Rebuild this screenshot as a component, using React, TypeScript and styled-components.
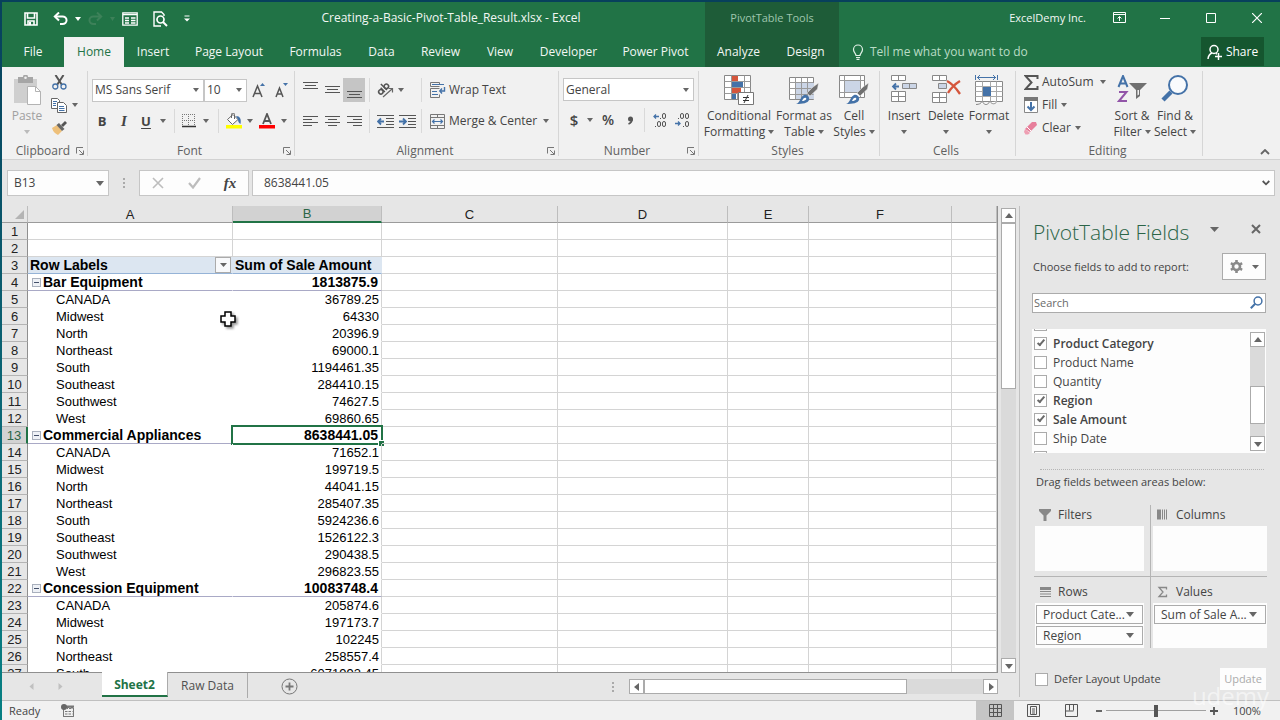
import React from "react";
import styled, { createGlobalStyle, css } from "styled-components";

const green = "#217346";
const ink = "#444444";
const steel = "#4472a8";
const line = "#ababab";
const ui = `"Open Sans", "Noto Sans", sans-serif`;
const sheetFont = `"Liberation Sans", Arial, sans-serif`;

const GlobalStyle = createGlobalStyle`
  *, *::before, *::after { box-sizing: border-box; }
  body { margin: 0; background: #e6e6e6; }
  button, input, select { font: inherit; color: inherit; margin: 0; padding: 0; border: 0; background: none; border-radius: 0; }
  svg { display: block; flex: none; }
  h1, h2, p { margin: 0; font: inherit; }
`;

/* ---------- window ---------- */

const Window = styled.div`
  display: flex;
  flex-direction: column;
  height: 100vh;
  min-width: 1280px;
  overflow: hidden;
  border-left: 2px solid;
  border-top: 2px solid #07435a;
  border-image: linear-gradient(#07405c, #0b6a78 60%, #078083) 2;
  background: #e6e6e6;
  color: ${ink};
  font: 12px/16px ${ui};
`;

const TitleBar = styled.header`
  display: flex;
  flex: none;
  height: 35px;
  background: ${green};
  color: #f2f7f4;
`;
const QuickAccess = styled.div`
  display: flex;
  align-items: center;
  flex: 0 0 195px;
  min-width: 0;
  padding: 0 0 2px 18px;
`;
const DocTitle = styled.h1`
  flex: 0 0 508px;
  text-align: center;
  font-size: 12px;
  line-height: 32px;
`;
const ToolTitle = styled.div`
  flex: 0 0 134px;
  background: #1e5c38;
  color: #9fc6ae;
  text-align: center;
  font-size: 11px;
  line-height: 32px;
`;
const Account = styled.div`
  flex: 1;
  text-align: right;
  padding-right: 10px;
  font-size: 11px;
  line-height: 32px;
`;
const Icon = styled.button<{ $w: number; $h?: number; $on?: boolean }>`
  display: flex;
  align-items: center;
  justify-content: center;
  flex: none;
  width: ${(p) => p.$w}px;
  height: ${(p) => p.$h ?? 24}px;
  ${(p) => p.$on && css`background: #c5c5c5;`}
`;
const WindowButtons = styled.div`
  display: flex;
  align-items: center;
  flex: none;
  padding-bottom: 4px;
`;

const TabBar = styled.nav`
  display: flex;
  flex: none;
  height: 30px;
  background: ${green};
  color: #f2f7f4;
`;
const Tab = styled.button<{ $w: number; $active?: boolean; $tool?: boolean }>`
  flex: none;
  width: ${(p) => p.$w}px;
  line-height: 28px;
  white-space: nowrap;
  ${(p) => p.$active && css`background: #f1f1f1; color: ${green};`}
  ${(p) => p.$tool && css`background: #1e5c38;`}
`;
const Spacer = styled.div<{ $w?: number }>`
  flex: ${(p) => (p.$w ? `0 0 ${p.$w}px` : "1")};
`;
const TellMe = styled.button`
  display: flex;
  align-items: center;
  gap: 6px;
  padding: 0 0 1px 13px;
  flex: 1;
  color: #b9dcc5;
`;
const Share = styled.button`
  display: flex;
  align-items: center;
  justify-content: center;
  gap: 4px;
  width: 63px;
  height: 29px;
  margin-right: 16px;
  background: #15562f;
  color: #fff;
`;

/* ---------- ribbon ---------- */

const Ribbon = styled.section`
  display: flex;
  flex: none;
  height: 93px;
  padding-top: 4px;
  background: #f1f1f1;
  border-bottom: 1px solid #d2d2d2;
`;
const GroupBox = styled.div<{ $w: number }>`
  display: flex;
  flex-direction: column;
  justify-content: space-between;
  flex: none;
  width: ${(p) => p.$w}px;
  height: 85px;
  border-right: 1px solid #d6d6d6;
`;
const GroupBody = styled.div<{ $pad?: number }>`
  display: flex;
  height: 72px;
  padding-left: ${(p) => p.$pad ?? 4}px;
`;
const GroupLabel = styled.div`
  display: flex;
  align-items: center;
  margin-bottom: -3px;
  padding-right: 3px;
  color: #606060;
  span { flex: 1; text-align: center; padding-left: 8px; }
`;
const Stack = styled.div<{ $top?: number; $gap?: number; $w?: number }>`
  display: flex;
  flex-direction: column;
  flex: none;
  ${(p) => p.$w && css`width: ${p.$w}px;`}
  padding-top: ${(p) => p.$top ?? 0}px;
  gap: ${(p) => p.$gap ?? 0}px;
`;
const Row = styled.div`
  display: flex;
  align-items: center;
`;
const Big = styled.button<{ $w: number; $dim?: boolean }>`
  display: flex;
  flex-direction: column;
  align-items: center;
  flex: none;
  width: ${(p) => p.$w}px;
  padding-top: 4px;
  line-height: 16px;
  white-space: nowrap;
  color: ${(p) => (p.$dim ? "#a0a0a0" : ink)};
  svg + span { margin-top: 3px; }
  & > span { display: flex; align-items: center; gap: 3px; height: 16px; }
`;
const Labeled = styled.button<{ $h?: number; $gap?: number }>`
  display: flex;
  align-items: center;
  gap: ${(p) => p.$gap ?? 4}px;
  height: ${(p) => p.$h ?? 24}px;
  white-space: nowrap;
`;
const Divider = styled.div`
  width: 1px;
  height: 24px;
  background: #d9d9d9;
`;
const Glyph = styled.span<{ $i?: boolean; $u?: boolean; $size?: number }>`
  font-weight: ${(p) => (p.$size ? 600 : 700)};
  font-size: ${(p) => p.$size ?? 13}px;
  line-height: 16px;
  ${(p) => p.$i && css`font-family: "Liberation Serif", serif; font-style: italic; font-size: 15px;`}
  ${(p) => p.$u && css`text-decoration: underline; text-underline-offset: 2px;`}
`;
const ComboBox = styled.label<{ $w: number }>`
  display: grid;
  align-items: center;
  flex: none;
  width: ${(p) => p.$w}px;
  height: 23px;
  border: 1px solid #c6c6c6;
  background: #fff;
  & > * { grid-area: 1 / 1; }
  & > svg { justify-self: end; margin-right: 4px; pointer-events: none; }
  select { appearance: none; height: 21px; width: 100%; padding-left: 2px; outline: 0; }
`;
const CollapseBox = styled.div`
  display: flex;
  flex: 1;
  align-items: flex-end;
  justify-content: flex-end;
  padding: 0 5px 2px 0;
`;

/* ---------- formula bar ---------- */

const FormulaBar = styled.section`
  display: flex;
  align-items: center;
  flex: none;
  height: 46px;
  padding: 0 5px;
`;
const Field = styled.div<{ $w?: number }>`
  display: flex;
  align-items: center;
  flex: ${(p) => (p.$w ? `0 0 ${p.$w}px` : "1")};
  min-width: 0;
  height: 26px;
  border: 1px solid #c6c6c6;
  background: #fdfdfd;
  input { flex: 1; width: 100%; min-width: 0; padding-left: ${(p) => (p.$w ? 6 : 11)}px; outline: 0; }
  input + svg { margin-right: 4px; }
`;
const Dots = styled.div<{ $w: number }>`
  display: flex;
  justify-content: center;
  flex: 0 0 ${(p) => p.$w}px;
`;

/* ---------- work area ---------- */

const Work = styled.main`
  display: flex;
  flex: 1;
  min-height: 0;
`;
const Book = styled.div`
  display: flex;
  flex-direction: column;
  flex: 1;
  min-width: 0;
`;
const SheetRow = styled.div`
  display: flex;
  flex: 1;
  min-height: 0;
`;
const Sheet = styled.div`
  flex: 1;
  min-width: 0;
  overflow: hidden;
  background: #fff;
  border-right: 1px solid #8f8f8f;
  border-bottom: 1px solid #8f8f8f;
`;
const Grid = styled.table`
  width: 100%;
  table-layout: fixed;
  border-collapse: separate;
  border-spacing: 0;
  color: #000;
  font: 13px/14px ${sheetFont};
  tr { height: 17px; }
`;
const ColHead = styled.th<{ $on?: boolean }>`
  height: 17px;
  padding: 1px 0 0;
  background: ${(p) => (p.$on ? "#d2d2d2" : "#e6e6e6")};
  border-right: 1px solid #bdbdbd;
  border-bottom: 1px solid #9b9b9b;
  font-weight: 400;
  color: #222;
  ${(p) => p.$on && css`color: #2c6547; border-bottom: 2px solid ${green};`}
  svg { margin-left: auto; margin-right: 3px; }
`;
const RowHead = styled.th<{ $on?: boolean }>`
  height: 17px;
  padding: 2px 0 0;
  background: ${(p) => (p.$on ? "#d2d2d2" : "#e6e6e6")};
  border-right: ${(p) => (p.$on ? `2px solid ${green}` : "1px solid #8f8f8f")};
  border-bottom: 1px solid #b4b4b4;
  font-weight: 400;
  color: ${(p) => (p.$on ? "#2c6547" : "#222")};
`;
const Cell = styled.td<{ $kind?: string }>`
  position: relative;
  height: 17px;
  padding: 0 2px;
  white-space: nowrap;
  border-right: 1px solid #d4d4d4;
  border-bottom: 1px solid #d4d4d4;
  ${(p) => p.$kind === "head" && css`
    background: #dce6f1;
    border-bottom-color: #95b3d7;
    border-right-color: #dce6f1;
    font-weight: 700;
    font-size: 14px;
  `}
  ${(p) => p.$kind === "groupName" && css`
    border-right-color: #fff;
    border-bottom-color: #a9a9c6;
    font-weight: 700;
    font-size: 14px;
  `}
  ${(p) => p.$kind === "groupSum" && css`
    border-bottom-color: #a9a9c6;
    padding-right: 3px;
    font-weight: 700;
    font-size: 14px;
    text-align: right;
  `}
  ${(p) => p.$kind === "name" && css`
    border-right-color: #fff;
    border-bottom-color: #fff;
    padding: 2px 0 0 28px;
  `}
  ${(p) => p.$kind === "sum" && css`
    border-bottom-color: #fff;
    padding-top: 2px;
    text-align: right;
  `}
`;
const CellFlex = styled.div`
  display: flex;
  align-items: center;
  height: 16px;
  span { flex: 1; }
`;
const FilterButton = styled.button`
  display: flex;
  align-items: center;
  justify-content: center;
  width: 16px;
  height: 16px;
  margin-right: -1px;
  border: 1px solid ${line};
  background: #f8f9fb;
`;
const Collapse = styled.button`
  display: flex;
  align-items: center;
  justify-content: center;
  width: 9px;
  height: 9px;
  margin: 0 2px;
  border: 1px solid #a9b0bd;
  background: #eef1f6;
  &::after { content: ""; width: 5px; height: 1px; background: #44506a; }
`;
const Selection = styled.div`
  position: absolute;
  inset: -2px;
  border: 2px solid ${green};
  &::after {
    content: "";
    position: absolute;
    right: -3px;
    bottom: -3px;
    width: 6px;
    height: 6px;
    background: ${green};
    border: 1px solid #fff;
    border-width: 1px 0 0 1px;
  }
`;
const Pointer = styled.svg`
  position: absolute;
  left: 192px;
  top: 3px;
  z-index: 1;
  filter: drop-shadow(2px 2px 1px rgba(0, 0, 0, 0.4));
`;

const VScroll = styled.div`
  display: flex;
  flex-direction: column;
  align-items: center;
  flex: 0 0 21px;
  padding: 2px 0 0;
`;
const VTrack = styled.div`
  flex: 1;
  width: 15px;
  background: #dadada;
`;
const ScrollButton = styled.button`
  display: flex;
  align-items: center;
  justify-content: center;
  flex: none;
  width: 15px;
  height: 15px;
  border: 1px solid ${line};
  background: #fff;
`;
const Thumb = styled.div<{ $w: number; $h: number }>`
  width: ${(p) => p.$w}px;
  height: ${(p) => p.$h}px;
  border: 1px solid ${line};
  background: #fff;
`;
const ThumbGap = styled.div`
  height: 39px;
`;

const SheetTabs = styled.div`
  display: flex;
  height: 27px;
  flex: none;
`;
const NavArrows = styled.div`
  display: flex;
  align-items: center;
  width: 100px;
  padding-left: 15px;
`;
const SheetTab = styled.button<{ $active?: boolean }>`
  width: ${(p) => (p.$active ? 66 : 80)}px;
  height: 25px;
  font-size: 12px;
  line-height: 25px;
  color: #505050;
  border-right: 1px solid ${line};
  ${(p) => p.$active && css`
    position: relative;
    margin-top: -1px;
    background: #fff;
    color: ${green};
    font-weight: 700;
    border-bottom: 2px solid ${green};
  `}
`;
const HScroll = styled.div`
  display: flex;
  align-items: center;
  flex: 0 0 369px;
  margin-right: 21px;
`;
const HTrack = styled.div`
  flex: 1;
  height: 15px;
  background: #dadada;
`;

/* ---------- field pane ---------- */

const Pane = styled.aside`
  display: flex;
  flex-direction: column;
  flex: 0 0 261px;
  padding: 14px 14px 0 12px;
  margin-bottom: 3px;
  border-left: 1px solid #c0c0c0;
`;
const PaneHead = styled.div`
  display: flex;
  align-items: flex-start;
  height: 33px;
  padding-left: 1px;
`;
const PaneTitle = styled.h2`
  flex: 1;
  font-weight: 300;
  font-size: 21px;
  line-height: 24px;
  white-space: nowrap;
  color: #2b6447;
`;
const PaneLine = styled.div`
  display: flex;
  align-items: center;
  justify-content: space-between;
  height: 27px;
  padding-left: 1px;
  font-size: 11px;
`;
const GearButton = styled.button`
  display: flex;
  align-items: center;
  justify-content: center;
  gap: 9px;
  width: 44px;
  height: 27px;
  border: 1px solid ${line};
  background: #fdfdfd;
`;
const Search = styled.label`
  display: flex;
  align-items: center;
  height: 20px;
  margin-top: 13px;
  padding: 0 2px 1px 1px;
  border: 1px solid ${line};
  background: #fff;
  font-size: 11px;
  input { flex: 1; min-width: 0; outline: 0; line-height: 17px; }
  input::placeholder { color: #6a6a6a; opacity: 1; }
`;
const FieldBox = styled.div`
  display: flex;
  flex: none;
  height: 124px;
  margin-top: 16px;
  background: #fdfdfd;
`;
const FieldList = styled.div`
  display: flex;
  flex-direction: column;
  justify-content: center;
  flex: 1;
  overflow: hidden;
`;
const Check = styled.label<{ $bold?: boolean; $small?: boolean }>`
  display: flex;
  align-items: center;
  gap: 6px;
  flex: none;
  height: 19px;
  padding-left: 2px;
  font-weight: ${(p) => (p.$bold ? 600 : 400)};
  ${(p) => p.$small && css`font-size: 11px;`}
  input {
    appearance: none;
    display: flex;
    justify-content: center;
    width: 13px;
    height: 13px;
    border: 1px solid ${line};
    background: #fff;
  }
  input:checked::after {
    content: "";
    width: 4px;
    height: 8px;
    border: solid #6a6a6a;
    border-width: 0 2px 2px 0;
    transform: rotate(40deg);
  }
`;
const FieldScroll = styled.div`
  display: flex;
  flex-direction: column;
  flex: 0 0 16px;
  padding: 3px 0 2px;
`;
const Dotted = styled.div`
  margin: 16px 2px 0 8px;
  border-top: 1px dotted #b5b5b5;
`;
const DragText = styled.p`
  padding: 4px 0 0 4px;
  font-size: 11px;
`;
const Areas = styled.div`
  display: grid;
  grid-template-columns: 117px 1fr;
  margin: 15px -1px 0 2px;
`;
const Area = styled.section<{ $left?: boolean; $upper?: boolean }>`
  height: ${(p) => (p.$upper ? 72 : 71)}px;
  padding-top: ${(p) => (p.$upper ? 0 : 5)}px;
  ${(p) => p.$left ? css`padding-right: 6px; padding-left: 1px; border-right: 1px solid #b5b5b5;` : css`padding-left: 2px;`}
  ${(p) => p.$upper && css`border-bottom: 1px solid #b5b5b5;`}
  h2 { display: flex; align-items: center; gap: 7px; height: 21px; padding: 0 0 1px 4px; }
`;
const DropZone = styled.div`
  display: flex;
  flex-direction: column;
  gap: 2px;
  height: 45px;
  padding: 2px 1px;
  background: #fdfdfd;
`;
const Pill = styled.button`
  display: flex;
  align-items: center;
  justify-content: space-between;
  height: 19px;
  padding: 0 8px 0 6px;
  border: 1px solid ${line};
  white-space: nowrap;
`;
const Footer = styled.div`
  display: flex;
  align-items: center;
  justify-content: space-between;
  margin-top: 20px;
  padding-left: 1px;
`;
const Update = styled.button`
  width: 46px;
  height: 22px;
  background: #fdfdfd;
  color: #ababab;
  font-size: 11px;
`;

/* ---------- status bar ---------- */

const Status = styled.footer`
  display: flex;
  align-items: center;
  flex: none;
  height: 20px;
  padding-left: 7px;
  background: #f1f1f1;
  border-top: 1px solid #c0c0c0;
  font-size: 11px;
`;
const Zoom = styled.input`
  appearance: none;
  width: 100px;
  height: 14px;
  margin: 0 4px;
  background: linear-gradient(#a0a0a0, #a0a0a0) center / 100% 1px no-repeat;
  &::-webkit-slider-thumb {
    appearance: none;
    width: 4px;
    height: 12px;
    background: #555;
  }
`;
const Percent = styled.span`
  width: 62px;
  padding-left: 15px;
`;
const Watermark = styled.div`
  position: absolute;
  right: 11px;
  bottom: 8px;
  font: 24px/32px ${ui};
  color: rgba(255, 255, 255, 0.55);
  pointer-events: none;
`;
const Frame = styled.div`
  position: relative;
`;

/* ---------- icons ---------- */

const Caret = ({ w = 7, c = "#666" }: { w?: number; c?: string }) => (
  <svg width={w} height={w > 7 ? 5 : 4} viewBox="0 0 8 4" preserveAspectRatio="none"><path d="M0 0h8L4 4z" fill={c} /></svg>
);
const Tri = ({ d }: { d: "up" | "down" | "left" | "right" }) => {
  const paths = { up: "M4 1l4 5H0z", down: "M0 2h8L4 7z", left: "M6 0v8L1 4z", right: "M2 0v8l5-4z" };
  return <svg width="8" height="8"><path d={paths[d]} fill="#666" /></svg>;
};
const S = ({ w, h, children }: { w: number; h: number; children: React.ReactNode }) => (
  <svg width={w} height={h} viewBox={`0 0 ${w} ${h}`} fill="none">{children}</svg>
);
const Launcher = () => (
  <S w={8} h={8}><path d="M0.5 6.500V.5H7M3 3l4 4M7.500 3.500v4h-4" stroke="#777" /></S>
);
const SaveIcon = () => (
  <S w={14} h={14}><path d="M1 1h12v12H1zM3.500 1v5h7V1M4 13V9h6v4" stroke="#fff" strokeWidth="1.600" /><path d="M5 10h2v3H5z" fill="#fff" /></S>
);
const UndoIcon = () => (
  <S w={15} h={13}><path d="M2 4.500h7.500a4 3.700 0 0 1 0 7.500H7" stroke="#fff" strokeWidth="2" /><path d="M6 .5L1.800 4.500 6 8.500" stroke="#fff" strokeWidth="2" /></S>
);
const RedoIcon = () => (
  <S w={15} h={13}><path d="M13 4.500H5.500a4 3.700 0 0 0 0 7.500H8M9 .5l4.200 4L9 8.500" stroke="#3d8159" strokeWidth="2" /></S>
);
const FormIcon = () => (
  <S w={16} h={14}><path d="M.8 .8h14.400v12.400H.8z" stroke="#fff" strokeWidth="1.300" /><path d="M1 2.500h14M3 6h4M3 8.500h4M3 11h4M9 6h4.500M9 8.500h4.500M9 11h4.500" stroke="#fff" strokeWidth="1.300" /></S>
);
const PreviewIcon = () => (
  <S w={15} h={16}><path d="M11 5V3.500L8.500 1H1v14h7" stroke="#fff" strokeWidth="1.400" /><circle cx="7.500" cy="8.500" r="3.500" stroke="#fff" strokeWidth="1.700" /><path d="M10 11l4 4" stroke="#fff" strokeWidth="2" /></S>
);
const CustomizeIcon = () => (
  <S w={6} h={7}><path d="M.5 1h5" stroke="#fff" /><path d="M0 3.500h6l-3 3z" fill="#fff" /></S>
);
const RibbonIcon = () => (
  <S w={13} h={11}><path d="M.5 .5h12v10H.5zM.5 2.500h12M6.500 9V4.500M4.500 6.500l2-2 2 2" stroke="#fff" /></S>
);
const BulbIcon = () => (
  <S w={12} h={16}><path d="M4 11.500c0-2-2.500-3-2.500-6a4.300 4.300 0 0 1 9 0c0 3-2.500 4-2.500 6zM4 13.500h4M4.500 15.300h3" stroke="#e2f1e7" strokeWidth="1.200" /></S>
);
const PersonIcon = () => (
  <S w={15} h={16}><circle cx="7" cy="5.500" r="4" stroke="#fff" strokeWidth="1.500" /><path d="M1 15c.3-3 1.500-5 4-6M9 9.500l1 .5M8 12.500h7M11.500 9v7" stroke="#fff" strokeWidth="1.500" /></S>
);
const PasteIcon = () => (
  <S w={28} h={30}>
    <path d="M1 4h23v24H1z" fill="#cfcfcf" /><path d="M5 2h5a2.500 2.500 0 0 1 5 0h5v6H5z" fill="#a6a6a6" /><circle cx="12.500" cy="2.800" r="1.300" fill="#f1f1f1" />
    <path d="M14.500 11.500h8l5 5v13h-13z" fill="#fff" stroke="#b3b3b3" /><path d="M22.500 11.500v5h5" stroke="#b3b3b3" />
  </S>
);
const CutIcon = () => (
  <S w={15} h={15}><path d="M3.500 0L10 10M11.500 0L5 10" stroke="#555" strokeWidth="2" /><circle cx="3.300" cy="11.500" r="2.500" stroke={steel} strokeWidth="1.300" /><circle cx="11.500" cy="11.500" r="2.500" stroke={steel} strokeWidth="1.300" /></S>
);
const CopyIcon = () => (
  <S w={16} h={15}>
    <path d="M.5 .5h6l2 2v8h-8z" fill="#fff" stroke="#666" /><path d="M2 3.500h4M2 5.500h3M2 7.500h3" stroke={steel} />
    <path d="M6.500 4.500h6l3 3v7h-9z" fill="#fff" stroke="#666" /><path d="M8 8.500h5M8 10.500h5.500M8 12.500h5.500" stroke={steel} />
  </S>
);
const BrushIcon = () => (
  <S w={16} h={14}><path d="M1 7l5-3 5 6-4 4c-2-1-5-3-6-7z" fill="#eec07a" /><path d="M5.500 4l2.500-2 5.500 6-2.500 2z" fill="#666" /><path d="M10 4l4-4 2 2-4 4z" fill="#555" /></S>
);
const Lines = ({ w, o = 0, a = "left", h = 17 }: { w: number[]; o?: number; a?: "left" | "mid" | "right"; h?: number }) => (
  <S w={15} h={h}>
    {w.map((n, i) => {
      const x = a === "left" ? 0 : a === "mid" ? (15 - n) / 2 : 15 - n;
      return <rect key={i} x={Math.floor(x)} y={o + i * 3} width={n} height="1" fill="#555" />;
    })}
  </S>
);
const AlignIcon = ({ a }: { a: "left" | "mid" | "right" }) => <Lines a={a} w={[15, 9, 15, 9]} h={10} />;
const BordersIcon = () => (
  <S w={14} h={14}><path d="M.5 0v12M6.500 0v12M12.500 0v12M0 .5h13M0 6.500h13" stroke="#777" strokeDasharray="1 1" /><path d="M0 12.500h14" stroke="#333" strokeWidth="1.500" /></S>
);
const FillIcon = () => (
  <S w={18} h={16}><path d="M2.500 6.500L8 1.500l5 5-5.500 5z" fill="#fff" stroke="#666" /><path d="M6.500 5V1.500a1.500 1.500 0 0 1 3 0V6" stroke="#666" /><path d="M11 3c4 0 5.500 3 4.500 8-1.500-1-2.500-2.500-2.500-4.500z" fill={steel} /><path d="M1 12h16v3.500H1z" fill="#ff0" /></S>
);
const FontColorIcon = () => (
  <S w={16} h={16}><path d="M4 11L8 1l4 10M5.300 8h5.400" stroke="#555" strokeWidth="1.800" /><path d="M0 12h16v3.500H0z" fill="#f00" /></S>
);
const OrientIcon = () => (
  <S w={18} h={18}>
    <g transform="rotate(-45 7 8)" stroke="#555" strokeWidth="1.500">
      <circle cx="3.500" cy="8.500" r="2.200" /><path d="M6.200 5.500v6M9 3v8.500" /><circle cx="11.300" cy="8.500" r="2.200" />
    </g>
    <path d="M7 16l9-8M12.500 7.500h4v4" stroke="#666" strokeWidth="1.200" />
  </S>
);
const IndentIcon = ({ r }: { r?: boolean }) => (
  <S w={17} h={13}><path d="M0 .5h17M0 12.500h17M9 3.500h8M9 6.500h8M9 9.500h8" stroke="#555" />{r ? <path d="M0 6.500h6M4 3.500l3 3-3 3" stroke={steel} strokeWidth="1.800" /> : <path d="M7 6.500H1.500M4 3.500l-3 3 3 3" stroke={steel} strokeWidth="1.800" />}</S>
);
const WrapIcon = () => (
  <S w={16} h={16}><path d="M9.500 2.500V.5H.5v4h9M9.500 6.500H.5v9h9v-3" stroke="#777" /><path d="M2 2.500h12M2 9.500h5M2 12.500h6" stroke={steel} /><path d="M14.500 5v4H10M12 6.500L9.800 9l2.200 2.500" stroke={steel} strokeWidth="1.400" /></S>
);
const MergeIcon = () => (
  <S w={15} h={15}><path d="M.5 .5h14v14H.5zM.5 3.500h14M.5 11.500h14M7.500 .5v3M7.500 11.500v3" stroke="#777" /><path d="M2 7.500h11M4.500 5.500l-2 2 2 2M10.500 5.500l2 2-2 2" stroke={steel} strokeWidth="1.200" /></S>
);
const DecimalIcon = ({ more }: { more?: boolean }) => {
  const zero = (x: number, y: number) => <rect x={x + 0.5} y={y + 0.5} width="3" height="5" rx="1.500" />;
  const dot = (x: number, y: number) => <path d={`M${x} ${y + 5.500}h1`} />;
  return (
    <svg width="15" height="14" fill="none" stroke="#555">
      {more ? <>{dot(3, 0)}{zero(5, 0)}{zero(10, 0)}{dot(8, 8)}{zero(10, 8)}</> : <>{dot(7, 0)}{zero(9, 0)}{dot(2, 8)}{zero(4, 8)}{zero(9, 8)}</>}
      <path d={more ? "M0 10.500h5M3 8.500l2 2-2 2" : "M6 3.500H1M3 1.500l-2 2 2 2"} stroke={steel} strokeWidth="1.300" />
    </svg>
  );
};
const ConditionalIcon = () => (
  <S w={30} h={30}>
    <path d="M.5 .5h26v24H.5z" fill="#fff" stroke="#888" /><path d="M.5 6.500h26M.5 12.500h26M.5 18.500h26M7.500 .5v24M13.500 .5v24M20.500 .5v24" stroke="#999" />
    <path d="M8 1h6v5H8zM8 13h9v5H8z" fill="#d5563c" /><path d="M8 7h11v5H8zM8 19h4v5H8z" fill={steel} />
    <path d="M14.500 17.500h15v12h-15z" fill="#fff" stroke="#777" /><path d="M19 22.500h6M19 25.500h6M24 20l-4 8" stroke="#333" />
  </S>
);
const BrushTip = () => (
  <>
    <path d="M29.500 8l-1 6-7.500 7-3-3 6-6z" fill="#707070" stroke="#f1f1f1" strokeWidth=".5" />
    <path d="M7 29c4-1 4-7 8-9 3-1 6 2 5 5-1 3-6 4-13 4z" fill={steel} /><path d="M13 26c1-3 3-4 4-3s-1 3-4 3z" fill="#fff" />
  </>
);
const TableIcon = () => (
  <S w={30} h={30}>
    <path d="M.5 2.500h24v22H.5z" fill="#fff" stroke="#888" /><path d="M7 8h18v16H7z" fill="#cbd5e6" /><path d="M.5 7.500h24M.5 13.500h24M.5 19.500h24M6.500 2.500v22M12.500 2.500v22M18.500 2.500v22" stroke="#999" />
    <BrushTip />
  </S>
);
const StylesIcon = () => (
  <S w={30} h={30}>
    <path d="M.5 .5h25v22H.5z" fill="#fff" stroke="#888" /><path d="M6 6h16v12H6z" fill="#cbd5e6" /><path d="M.5 5.500h25M.5 17.500h25M5.500 .5v22M21.500 .5v22" stroke="#999" />
    <BrushTip />
  </S>
);
const InsertIcon = () => (
  <S w={28} h={30}>
    <path d="M1.500 .5h14v5h-14zM8.500 .5v5M1.500 16.500h14v10h-14zM8.500 16.500v10M1.500 21.500h14" fill="#fff" stroke="#888" />
    <path d="M12.500 8.500h14v5h-14zM19.500 8.500v5" fill="#cbd5e6" stroke="#888" /><path d="M9 11.500H3M6 8.500l-3 3 3 3" stroke={steel} strokeWidth="1.800" />
  </S>
);
const DeleteIcon = () => (
  <S w={30} h={30}>
    <path d="M1.500 .5h14v5h-14zM8.500 .5v5M1.500 17.500h14v10h-14zM8.500 17.500v10M1.500 22.500h14" fill="#fff" stroke="#888" />
    <path d="M7.500 8.500h8v5h-8z" fill="#cbd5e6" stroke="#888" /><path d="M16 6c4 2 9 7 13 13M29 6c-5 3-9 7-12 12" stroke="#d5563c" strokeWidth="2.300" />
  </S>
);
const FormatIcon = () => (
  <S w={30} h={30}>
    <path d="M1.500 0v5M23.500 0v5M3 2.500h19M6 0L3.500 2.500 6 5M19 0l2.500 2.500L19 5" stroke={steel} />
    <path d="M1.500 6.500h27v20h-27z" fill="#fff" stroke="#888" /><path d="M1.500 11.500h27M1.500 21.500h27M8.500 6.500v20M16.500 6.500v20M22.500 6.500v20M1.500 16.500h27" stroke="#aaa" /><path d="M9 12h8v9H9z" fill={steel} />
    <path d="M2 29.500c3 0 5-1 6-3 3 4 5 4 8 0 2 3 5 3 7 0" stroke="#888" fill="#fff" />
  </S>
);
const SigmaIcon = () => (
  <S w={15} h={15}><path d="M13.500 4V1H1.500l6 6.500-6 6.500h12v-3" stroke="#555" strokeWidth="2" /></S>
);
const FillDownIcon = () => (
  <S w={14} h={16}><path d="M.5 .5h13v15H.5z" fill="#fff" stroke="#888" /><path d="M0 0h14v4H0z" fill="#777" /><path d="M7 5v8M3.500 9.500L7 13l3.500-3.500" stroke={steel} strokeWidth="2" /></S>
);
const EraserIcon = () => (
  <S w={14} h={14}><path d="M1 8l7-7h4l1 3-7 7z" fill="#e77f9b" /><path d="M1 8l5 4-2 1.500H1.500L0 11z" fill="#ef9fb3" /><path d="M3 6l4.500 4.500" stroke="#fff" strokeWidth="1" /></S>
);
const SortIcon = () => (
  <S w={30} h={30}>
    <path d="M1.500 12L6 1l4.500 11M3 8.500h6" stroke={steel} strokeWidth="2" /><path d="M2 17h7.500L2 26h8" stroke="#9255a8" strokeWidth="2" />
    <path d="M12 8h18l-7 7v6l-4 3v-9z" fill="#707070" /><path d="M20.500 15v5.500l1.500-1V15z" fill="#f1f1f1" />
  </S>
);
const FindIcon = () => (
  <S w={28} h={30}><circle cx="17" cy="10" r="9" fill="#f9fbfd" stroke={steel} strokeWidth="2" /><path d="M10 17L2 25" stroke={steel} strokeWidth="4.500" /></S>
);
const GearIcon = () => (
  <S w={13} h={13}><circle cx="6.500" cy="6.500" r="3.500" stroke="#8a8a8a" strokeWidth="2.600" /><path d="M6.500 0v2.500M6.500 10.500V13M.9 3.200L3 4.500M10 8.500l2.100 1.300M.9 9.800L3 8.500M10 4.500l2.100-1.300" stroke="#8a8a8a" strokeWidth="2.600" /></S>
);
const SearchIcon = () => (
  <S w={13} h={13}><circle cx="8" cy="5" r="3.900" stroke={steel} strokeWidth="1.500" /><path d="M5.200 7.800L.8 12.200" stroke={steel} strokeWidth="2" /></S>
);
const DotIcon = () => (
  <S w={2} h={10}><path d="M0 0h2v2H0zM0 4h2v2H0zM0 8h2v2H0z" fill="#aaa" /></S>
);
const MacroIcon = () => (
  <S w={13} h={13}><path d="M2.500 3.500h10v9h-10zM6 3v1.500h6.500M4 7.500h7.500M4 10h7.500" stroke="#777" strokeDasharray="2.500 1" /><path d="M2.500 3.500v9h10v-9" stroke="#777" /><path d="M5 1.500h8v2H5z" fill="#777" /><circle cx="3" cy="3" r="3" fill="#666" /></S>
);

/* ---------- data ---------- */

type Line = { kind: "group" | "item"; label: string; value: string };
const regions = ["CANADA", "Midwest", "North", "Northeast", "South", "Southeast", "Southwest", "West"];
const block = (label: string, total: string, values: string[]): Line[] => [
  { kind: "group", label, value: total },
  ...values.map((value, i): Line => ({ kind: "item", label: regions[i], value })),
];
const pivot: Line[] = [
  ...block("Bar Equipment", "1813875.9", ["36789.25", "64330", "20396.9", "69000.1", "1194461.35", "284410.15", "74627.5", "69860.65"]),
  ...block("Commercial Appliances", "8638441.05", ["71652.1", "199719.5", "44041.15", "285407.35", "5924236.6", "1526122.3", "290438.5", "296823.55"]),
  ...block("Concession Equipment", "10083748.4", ["205874.6", "197173.7", "102245", "258557.4", "6071992.45"]),
];
const columns: [string, number | undefined][] = [["A", 205], ["B", 149], ["C", 176], ["D", 170], ["E", 81], ["F", 143], ["", undefined]];
const tabs: [string, number][] = [["File", 62], ["Home", 60], ["Insert", 58], ["Page Layout", 94], ["Formulas", 79], ["Data", 53], ["Review", 65], ["View", 54], ["Developer", 83], ["Power Pivot", 91]];
const fields: [string, boolean][] = [["Order Date", false], ["Product Category", true], ["Product Name", false], ["Quantity", false], ["Region", true], ["Sale Amount", true], ["Ship Date", false], ["Unit Price", false]];

const Group = ({ name, w, pad, launcher, children }: { name: string; w: number; pad?: number; launcher?: boolean; children: React.ReactNode }) => (
  <GroupBox $w={w}>
    <GroupBody $pad={pad}>{children}</GroupBody>
    <GroupLabel><span>{name}</span>{launcher ? <Icon $w={8} $h={16} aria-label={`${name} settings`}><Launcher /></Icon> : <Spacer $w={8} />}</GroupLabel>
  </GroupBox>
);
const Combo = ({ w, label, value }: { w: number; label: string; value: string }) => (
  <ComboBox $w={w}><select aria-label={label}><option>{value}</option></select><Caret w={6} /></ComboBox>
);
const Blank = ({ n }: { n: number }) => <>{Array.from({ length: n }, (_, i) => <Cell key={i} />)}</>;

export default function App() {
  return (
    <Frame>
      <GlobalStyle />
      <Window>
        <TitleBar>
          <QuickAccess>
            <Icon $w={22} aria-label="Save"><SaveIcon /></Icon>
            <Icon $w={36} aria-label="Undo"><UndoIcon /></Icon>
            <Icon $w={0} aria-label="Undo list"><Caret w={6} c="#fff" /></Icon>
            <Icon $w={34} aria-label="Redo"><RedoIcon /></Icon>
            <Icon $w={0} aria-label="Redo list"><Caret w={5} c="#3d8159" /></Icon>
            <Icon $w={36} aria-label="Form"><FormIcon /></Icon>
            <Icon $w={24} aria-label="Print preview"><PreviewIcon /></Icon>
            <Icon $w={30} aria-label="Customize toolbar"><CustomizeIcon /></Icon>
          </QuickAccess>
          <DocTitle>Creating-a-Basic-Pivot-Table_Result.xlsx - Excel</DocTitle>
          <ToolTitle>PivotTable Tools</ToolTitle>
          <Account>ExcelDemy Inc.</Account>
          <WindowButtons>
            <Icon $w={46} aria-label="Ribbon options"><RibbonIcon /></Icon>
            <Icon $w={46} aria-label="Minimize"><S w={10} h={10}><path d="M0 5.500h10" stroke="#fff" /></S></Icon>
            <Icon $w={46} aria-label="Maximize"><S w={10} h={10}><path d="M.5 .5h9v9h-9z" stroke="#fff" /></S></Icon>
            <Icon $w={46} aria-label="Close"><S w={10} h={10}><path d="M0 0l10 10M10 0L0 10" stroke="#fff" strokeWidth="1.200" /></S></Icon>
          </WindowButtons>
        </TitleBar>
        <TabBar>
          {tabs.map(([t, w]) => <Tab key={t} $w={w} $active={t === "Home"}>{t}</Tab>)}
          <Spacer $w={4} />
          <Tab $w={67} $tool>Analyze</Tab>
          <Tab $w={67} $tool>Design</Tab>
          <TellMe><BulbIcon />Tell me what you want to do</TellMe>
          <Share><PersonIcon />Share</Share>
        </TabBar>

        <Ribbon>
          <Group name="Clipboard" w={86} pad={2} launcher>
            <Big $w={46} $dim><PasteIcon /><span>Paste</span><span><Caret w={6} c="#bbb" /></span></Big>
            <Stack>
              <Row><Icon $w={18} $h={22} aria-label="Cut"><CutIcon /></Icon></Row>
              <Row><Icon $w={18} aria-label="Copy"><CopyIcon /></Icon><Icon $w={14} aria-label="Copy options"><Caret w={6} /></Icon></Row>
              <Row><Icon $w={18} $h={22} aria-label="Format painter"><BrushIcon /></Icon></Row>
            </Stack>
          </Group>
          <Group name="Font" w={207} launcher>
            <Stack $top={7} $gap={7}>
              <Row>
                <Combo w={112} label="Font" value="MS Sans Serif" />
                <Combo w={43} label="Font size" value="10" />
                <Icon $w={23} aria-label="Grow font"><S w={14} h={16}><path d="M1 15L5.500 4l4.500 11M2.500 11.500h6" stroke="#555" strokeWidth="1.500" /><path d="M8 4l2.500-3L13 4z" fill={steel} /></S></Icon>
                <Icon $w={23} aria-label="Shrink font"><S w={14} h={16}><path d="M1 15l3.500-9L8 15M2.200 12h4.600" stroke="#555" strokeWidth="1.500" /><path d="M8 1h5l-2.500 3z" fill={steel} /></S></Icon>
              </Row>
              <Row>
                <Icon $w={20} aria-label="Bold"><Glyph>B</Glyph></Icon>
                <Icon $w={24} aria-label="Italic"><Glyph $i>I</Glyph></Icon>
                <Icon $w={20} aria-label="Underline"><Glyph $u>U</Glyph></Icon>
                <Icon $w={14} aria-label="Underline options"><Caret w={6} /></Icon>
                <Spacer $w={4} /><Divider /><Spacer $w={4} />
                <Icon $w={20} aria-label="Borders"><BordersIcon /></Icon>
                <Icon $w={14} aria-label="Border options"><Caret w={6} /></Icon>
                <Spacer $w={5} /><Divider /><Spacer $w={4} />
                <Icon $w={22} aria-label="Fill color"><FillIcon /></Icon>
                <Icon $w={10} aria-label="Fill options"><Caret w={6} /></Icon>
                <Icon $w={24} aria-label="Font color"><FontColorIcon /></Icon>
                <Icon $w={10} aria-label="Font color options"><Caret w={6} /></Icon>
              </Row>
            </Stack>
          </Group>
          <Group name="Alignment" w={264} launcher>
            <Stack $top={7} $gap={7}>
              <Row>
                <Icon $w={22} aria-label="Top align"><Lines a="mid" w={[15, 11, 15]} /></Icon>
                <Icon $w={22} aria-label="Middle align"><Lines a="mid" w={[15, 11, 15]} o={4} /></Icon>
                <Icon $w={22} $on aria-label="Bottom align"><Lines a="mid" w={[15, 11, 15]} o={9} /></Icon>
                <Spacer $w={4} /><Divider /><Spacer $w={5} />
                <Icon $w={20} aria-label="Orientation"><OrientIcon /></Icon>
                <Icon $w={12} aria-label="Orientation options"><Caret w={6} /></Icon>
              </Row>
              <Row>
                <Icon $w={22} aria-label="Align left"><AlignIcon a="left" /></Icon>
                <Icon $w={22} aria-label="Center"><AlignIcon a="mid" /></Icon>
                <Icon $w={22} aria-label="Align right"><AlignIcon a="right" /></Icon>
                <Spacer $w={4} /><Divider /><Spacer $w={5} />
                <Icon $w={20} aria-label="Decrease indent"><IndentIcon /></Icon>
                <Icon $w={24} aria-label="Increase indent"><IndentIcon r /></Icon>
              </Row>
            </Stack>
            <Spacer $w={2} />
            <Stack $top={7} $gap={7}>
              <Divider /><Divider />
            </Stack>
            <Spacer $w={8} />
            <Stack $top={7} $gap={7}>
              <Labeled $gap={3}><WrapIcon />Wrap Text</Labeled>
              <Row><Labeled $gap={4}><MergeIcon />Merge &amp; Center</Labeled><Icon $w={18} aria-label="Merge options"><Caret w={6} /></Icon></Row>
            </Stack>
          </Group>
          <Group name="Number" w={140} launcher>
            <Stack $top={7} $gap={7}>
              <Combo w={131} label="Number format" value="General" />
              <Row>
                <Icon $w={22} aria-label="Currency"><Glyph $size={15}>$</Glyph></Icon>
                <Icon $w={10} aria-label="Currency options"><Caret w={6} /></Icon>
                <Icon $w={26} aria-label="Percent"><Glyph $size={14}>%</Glyph></Icon>
                <Icon $w={18} aria-label="Comma"><S w={7} h={9}><circle cx="3.500" cy="3" r="2.500" fill="#555" /><path d="M5 3c0 2-1 4-3.500 5" stroke="#555" strokeWidth="1.800" /></S></Icon>
                <Spacer $w={5} /><Divider /><Spacer $w={4} />
                <Icon $w={22} aria-label="Increase decimal"><DecimalIcon /></Icon>
                <Icon $w={22} aria-label="Decrease decimal"><DecimalIcon more /></Icon>
              </Row>
            </Stack>
          </Group>
          <Group name="Styles" w={181} pad={3}>
            <Big $w={74}><ConditionalIcon /><span>Conditional</span><span>Formatting<Caret w={6} /></span></Big>
            <Big $w={56}><TableIcon /><span>Format as</span><span>Table<Caret w={6} /></span></Big>
            <Big $w={44}><StylesIcon /><span>Cell</span><span>Styles<Caret w={6} /></span></Big>
          </Group>
          <Group name="Cells" w={136} pad={3}>
            <Big $w={42}><InsertIcon /><span>Insert</span><span><Caret w={6} /></span></Big>
            <Big $w={42}><DeleteIcon /><span>Delete</span><span><Caret w={6} /></span></Big>
            <Big $w={44}><FormatIcon /><span>Format</span><span><Caret w={6} /></span></Big>
          </Group>
          <Group name="Editing" w={187} pad={8}>
            <Stack $w={87}>
              <Row><Labeled $h={22} $gap={3}><SigmaIcon />AutoSum</Labeled><Icon $w={18} $h={22} aria-label="AutoSum options"><Caret w={6} /></Icon></Row>
              <Labeled><FillDownIcon />Fill<Caret w={6} /></Labeled>
              <Labeled $h={22}><EraserIcon />Clear<Caret w={6} /></Labeled>
            </Stack>
            <Big $w={42}><SortIcon /><span>Sort &amp;</span><span>Filter<Caret w={6} /></span></Big>
            <Big $w={44}><FindIcon /><span>Find &amp;</span><span>Select<Caret w={6} /></span></Big>
          </Group>
          <CollapseBox>
            <Icon $w={20} $h={10} aria-label="Collapse ribbon"><S w={10} h={6}><path d="M1 5l4-4 4 4" stroke="#666" strokeWidth="1.800" /></S></Icon>
          </CollapseBox>
        </Ribbon>

        <FormulaBar>
          <Field $w={102}><input aria-label="Name box" defaultValue="B13" /><Caret w={8} /></Field>
          <Dots $w={30}><DotIcon /></Dots>
          <Field $w={110}>
            <Icon $w={36} aria-label="Cancel"><S w={12} h={12}><path d="M1 1l10 10M11 1L1 11" stroke="#bdbdbd" strokeWidth="1.600" /></S></Icon>
            <Icon $w={36} aria-label="Enter"><S w={13} h={12}><path d="M1 6l4 4.500L12 1" stroke="#bdbdbd" strokeWidth="2.200" /></S></Icon>
            <Icon $w={36} aria-label="Insert function"><Glyph $i>fx</Glyph></Icon>
          </Field>
          <Spacer $w={3} />
          <Field><input aria-label="Formula" defaultValue="8638441.05" /><S w={8} h={6}><path d="M.7 1L4 4.300 7.300 1" stroke="#555" strokeWidth="1.800" /></S></Field>
        </FormulaBar>

        <Work>
          <Book>
            <SheetRow>
              <Sheet>
                <Grid>
                  <colgroup>
                    <col width={26} />
                    {columns.map(([c, w], i) => <col key={c + i} width={w} />)}
                  </colgroup>
                  <thead>
                    <tr>
                      <ColHead><S w={9} h={9}><path d="M9 0v9H0z" fill="#b4b4b4" /></S></ColHead>
                      {columns.map(([c], i) => <ColHead key={i} $on={c === "B"}>{c}</ColHead>)}
                    </tr>
                  </thead>
                  <tbody>
                    <tr><RowHead>1</RowHead><Blank n={7} /></tr>
                    <tr><RowHead>2</RowHead><Blank n={7} /></tr>
                    <tr>
                      <RowHead>3</RowHead>
                      <Cell $kind="head"><CellFlex><span>Row Labels</span><FilterButton aria-label="Filter rows"><Caret w={7} /></FilterButton></CellFlex></Cell>
                      <Cell $kind="head">Sum of Sale Amount</Cell>
                      <Blank n={5} />
                    </tr>
                    {pivot.map((l, i) => {
                      const n = i + 4;
                      const g = l.kind === "group";
                      return (
                        <tr key={n}>
                          <RowHead $on={n === 13}>{n}</RowHead>
                          <Cell $kind={g ? "groupName" : "name"}>
                            {g ? <CellFlex><Collapse aria-label={`Collapse ${l.label}`} /><span>{l.label}</span></CellFlex> : l.label}
                            {n === 6 && (
                              <Pointer width="16" height="16" viewBox="0 0 16 16"><path d="M5 1h6v4h4v6h-4v4H5v-4H1V5h4z" fill="#fff" stroke="#000" strokeWidth="1.500" /></Pointer>
                            )}
                          </Cell>
                          <Cell $kind={g ? "groupSum" : "sum"}>{l.value}{n === 13 && <Selection />}</Cell>
                          <Blank n={5} />
                        </tr>
                      );
                    })}
                  </tbody>
                </Grid>
              </Sheet>
              <VScroll>
                <ScrollButton aria-label="Scroll up"><Tri d="up" /></ScrollButton>
                <VTrack><Thumb $w={15} $h={166} /></VTrack>
                <ScrollButton aria-label="Scroll down"><Tri d="down" /></ScrollButton>
              </VScroll>
            </SheetRow>
            <SheetTabs>
              <NavArrows>
                <Icon $w={28} aria-label="Previous sheet"><S w={5} h={7}><path d="M4.500 0v7L.5 3.500z" fill="#c0c0c0" /></S></Icon>
                <Icon $w={30} aria-label="Next sheet"><S w={5} h={7}><path d="M.5 0v7l4-3.500z" fill="#c0c0c0" /></S></Icon>
              </NavArrows>
              <SheetTab $active>Sheet2</SheetTab>
              <SheetTab>Raw Data</SheetTab>
              <Icon $w={83} $h={27} aria-label="New sheet"><S w={17} h={17}><circle cx="8.500" cy="8.500" r="7.500" stroke="#777" /><path d="M4.500 8.500h8M8.500 4.500v8" stroke="#777" strokeWidth="1.800" /></S></Icon>
              <Spacer />
              <Row><Dots $w={32}><DotIcon /></Dots></Row>
              <HScroll>
                <ScrollButton aria-label="Scroll left"><Tri d="left" /></ScrollButton>
                <HTrack><Thumb $w={263} $h={15} /></HTrack>
                <ScrollButton aria-label="Scroll right"><Tri d="right" /></ScrollButton>
              </HScroll>
            </SheetTabs>
          </Book>

          <Pane>
            <PaneHead>
              <PaneTitle>PivotTable Fields</PaneTitle>
              <Icon $w={20} $h={18} aria-label="Pane options"><Caret w={9} /></Icon>
              <Spacer $w={22} />
              <Icon $w={20} $h={18} aria-label="Close pane"><S w={10} h={10}><path d="M1 1l8 8M9 1L1 9" stroke="#666" strokeWidth="2" /></S></Icon>
            </PaneHead>
            <PaneLine>
              Choose fields to add to report:
              <GearButton aria-label="Tools"><GearIcon /><Caret w={7} /></GearButton>
            </PaneLine>
            <Search><input aria-label="Search fields" placeholder="Search" /><SearchIcon /></Search>
            <FieldBox>
              <FieldList>
                {fields.map(([f, on]) => (
                  <Check key={f} $bold={on}><input type="checkbox" defaultChecked={on} />{f}</Check>
                ))}
              </FieldList>
              <FieldScroll>
                <ScrollButton aria-label="Fields up"><Tri d="up" /></ScrollButton>
                <VTrack><ThumbGap /><Thumb $w={15} $h={38} /></VTrack>
                <ScrollButton aria-label="Fields down"><Tri d="down" /></ScrollButton>
              </FieldScroll>
            </FieldBox>
            <Dotted />
            <DragText>Drag fields between areas below:</DragText>
            <Areas>
              <Area $left $upper>
                <h2><S w={12} h={12}><path d="M0 0h12v2L7.500 6.500V12h-3V6.500L0 2z" fill="#888" /></S>Filters</h2>
                <DropZone />
              </Area>
              <Area $upper>
                <h2><S w={12} h={12}><path d="M0 .5h4v10H0zM5 .5h1v10H5zM7 .5h1v10H7zM9 .5h1v10H9z" fill="#888" /></S>Columns</h2>
                <DropZone />
              </Area>
              <Area $left>
                <h2><S w={12} h={12}><path d="M1 1h11v3H1zM1 5h11v1H1zM1 7.500h11v1H1zM1 10h11v1H1z" fill="#888" /></S>Rows</h2>
                <DropZone>
                  <Pill>Product Cate...<Caret w={8} /></Pill>
                  <Pill>Region<Caret w={8} /></Pill>
                </DropZone>
              </Area>
              <Area>
                <h2><S w={12} h={12}><path d="M9.500 3.500V1.500H2l4 4.500-4 4.500h7.500v-2" stroke="#888" strokeWidth="1.300" /></S>Values</h2>
                <DropZone><Pill>Sum of Sale A...<Caret w={8} /></Pill></DropZone>
              </Area>
            </Areas>
            <Footer>
              <Check $small><input type="checkbox" />Defer Layout Update</Check>
              <Update disabled>Update</Update>
            </Footer>
          </Pane>
        </Work>

        <Status>
          <span>Ready</span>
          <Icon $w={54} $h={19} aria-label="Record macro"><MacroIcon /></Icon>
          <Spacer />
          <Icon $w={38} $h={19} $on aria-label="Normal view"><S w={13} h={13}><path d="M.5 .5h12v12H.5zM.5 4.500h12M.5 8.500h12M4.500 .5v12M8.500 .5v12" stroke="#555" /></S></Icon>
          <Icon $w={38} $h={19} aria-label="Page layout view"><S w={13} h={13}><path d="M.5 .5h12v12H.5zM3.500 2.500h6v8h-6zM5 5h3M5 7h3M5 9h3" stroke="#555" /></S></Icon>
          <Icon $w={38} $h={19} aria-label="Page break view"><S w={13} h={13}><path d="M.5 12.500V.5h12v12zM4.500 .5v6M8.500 .5v6M.5 7h8" stroke="#555" /></S></Icon>
          <Spacer $w={6} />
          <Icon $w={6} $h={19} aria-label="Zoom out"><S w={6} h={6}><path d="M0 3h6" stroke="#555" strokeWidth="1.800" /></S></Icon>
          <Zoom type="range" aria-label="Zoom" defaultValue={50} />
          <Icon $w={8} $h={19} aria-label="Zoom in"><S w={8} h={8}><path d="M0 4h8M4 0v8" stroke="#555" strokeWidth="1.800" /></S></Icon>
          <Percent>100%</Percent>
        </Status>
      </Window>
      <Watermark>udemy</Watermark>
    </Frame>
  );
}
